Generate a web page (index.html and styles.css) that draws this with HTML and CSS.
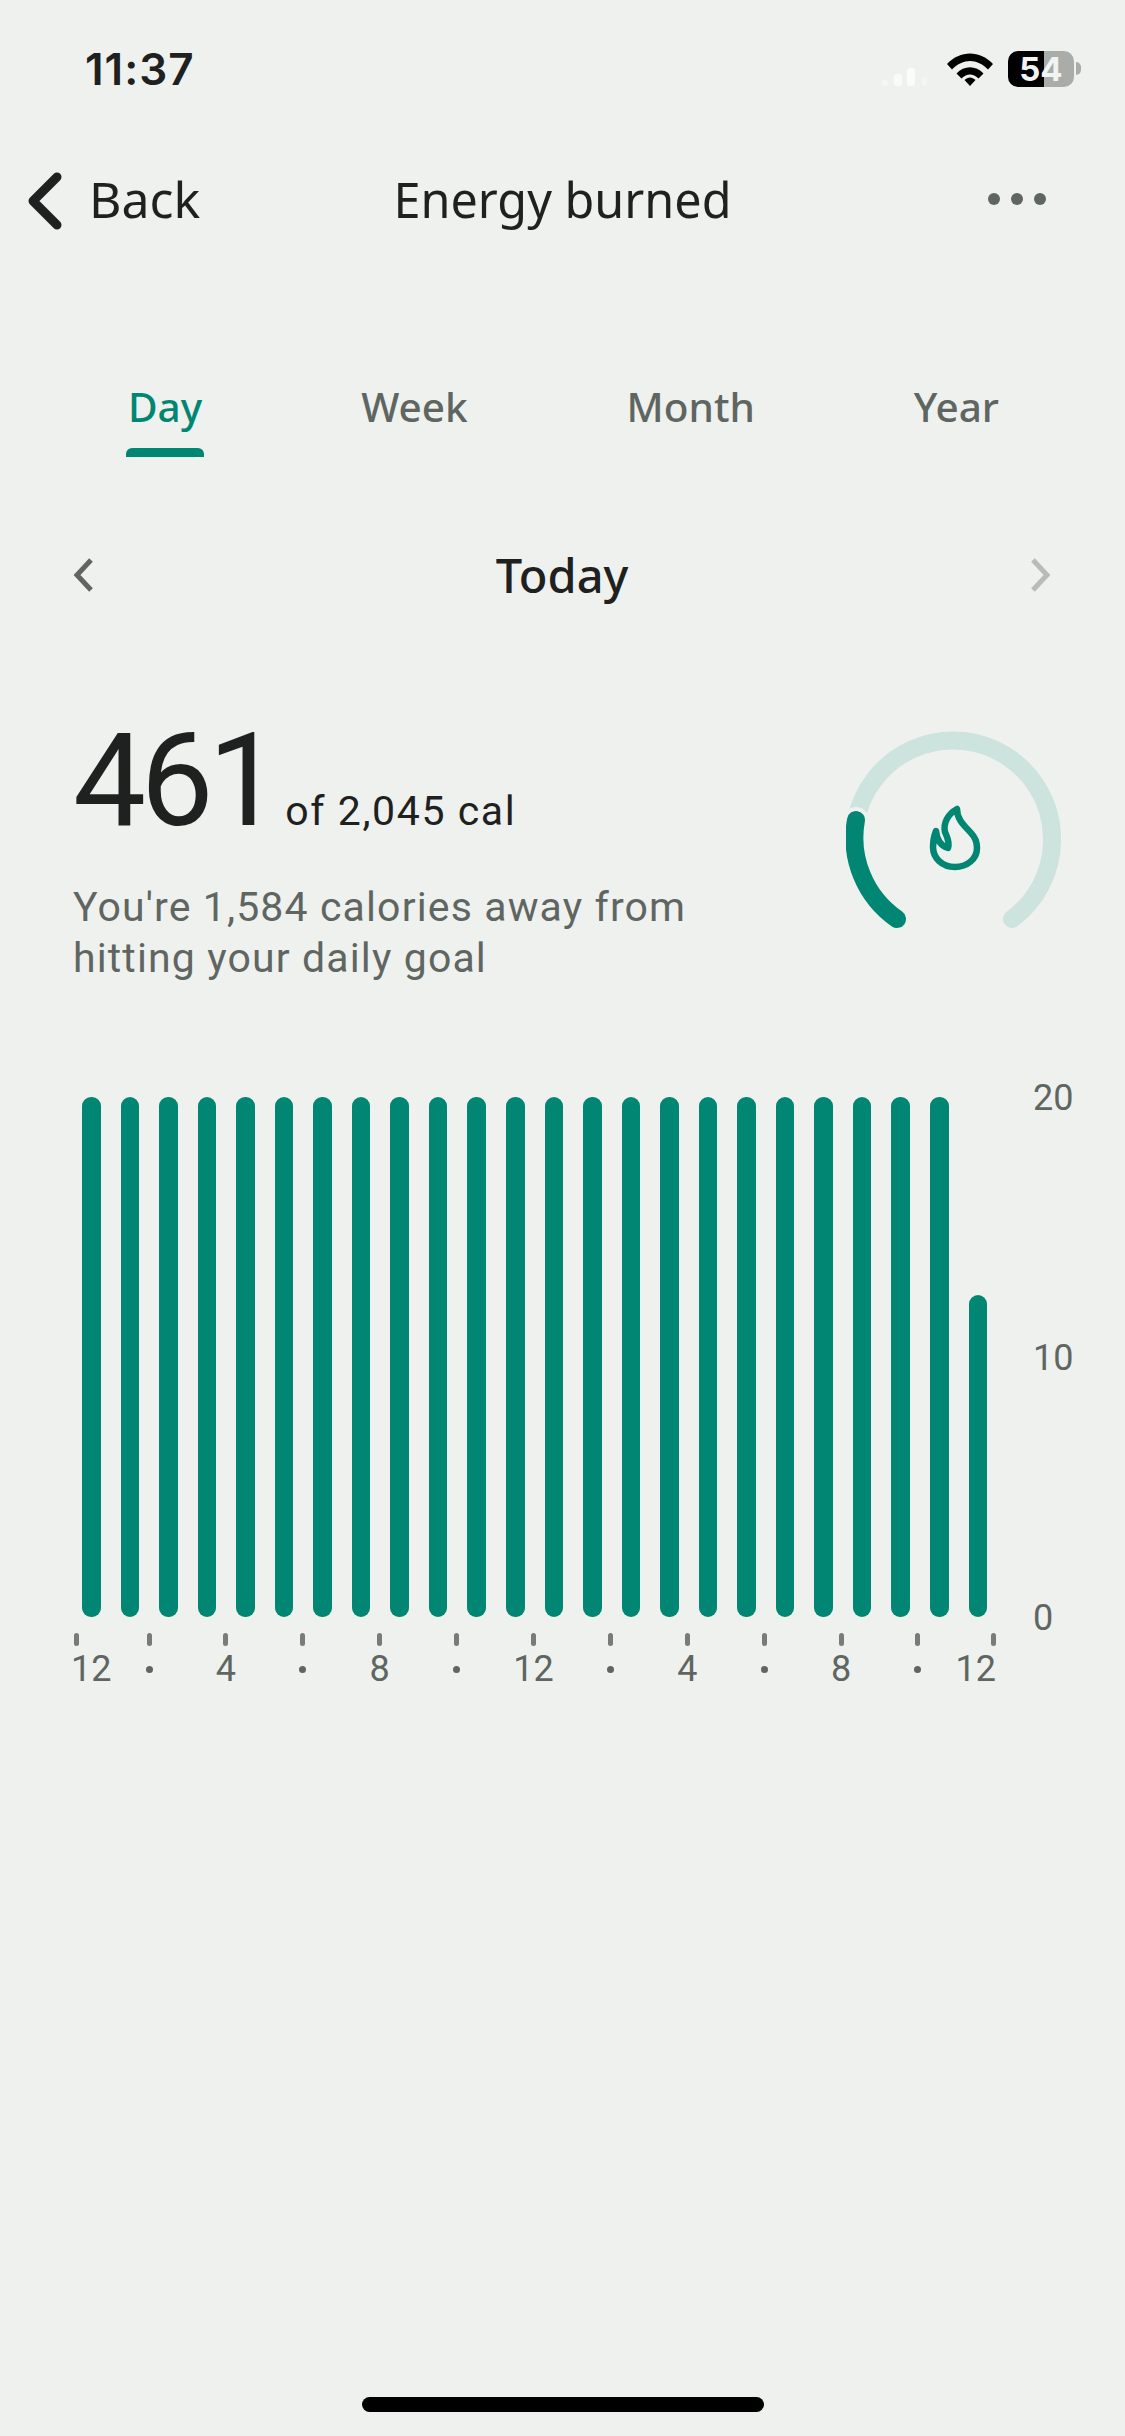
FILE: index.html
```html
<!DOCTYPE html>
<html lang="en">
  <head>
    <meta charset="UTF-8" />
    <meta name="viewport" content="width=device-width, initial-scale=1.0" />
    <title>Energy burned</title>
    <link rel="stylesheet" href="styles.css">
  </head>

  <body>
    <div class="status-bar">
      <span class="clock">11:37</span>
      <div class="status-icons">
        <svg class="signal" width="50" height="24" viewBox="0 0 50 24">
          <rect x="0" y="17" width="6" height="6" rx="2" fill="#f4f6f4" />
          <rect x="12" y="11" width="8" height="12" rx="3" fill="#f9faf9" />
          <rect x="25" y="5" width="8" height="18" rx="3" fill="#fafbfa" />
          <rect x="40" y="14" width="5" height="9" rx="2" fill="#f4f6f4" />
        </svg>
        <svg class="wifi" width="46" height="34" viewBox="0 0 46 34">
          <path d="M0 12 C13 -2 33 -2 46 12 L41 17.500 C30 6 16 6 5 17.500 Z" fill="#000" />
          <path d="M9.500 21.500 C17 13 29 13 36.500 21.500 L31.500 26.500 C26 21 20 21 14.500 26.500 Z" fill="#000" />
          <path d="M17.500 28 C21 24.500 25 24.500 28.500 28 L23 34 Z" fill="#000" />
        </svg>
        <div class="battery">
          <div class="battery-level">54</div>
          <div class="battery-nub"></div>
        </div>
      </div>
    </div>

    <div class="top-bar">
      <div class="back">
        <svg width="35" height="58" viewBox="0 0 35 58">
          <path d="M30 5 L6 29 L30 53" fill="none" stroke="#1f2120" stroke-width="9" stroke-linecap="round" stroke-linejoin="round" />
        </svg>
        <span>Back</span>
      </div>
      <h1>Energy burned</h1>
      <div class="more"><i></i><i></i><i></i></div>
    </div>

    <div class="tabs">
      <div class="tab active">Day</div>
      <div class="tab">Week</div>
      <div class="tab">Month</div>
      <div class="tab">Year</div>
    </div>

    <div class="date-row">
      <svg width="21" height="36" viewBox="0 0 21 36">
        <path d="M18 3 L4 18 L18 33" fill="none" stroke="#5f6662" stroke-width="5" />
      </svg>
      <span>Today</span>
      <svg width="21" height="36" viewBox="0 0 21 36">
        <path d="M3 3 L17 18 L3 33" fill="none" stroke="#b7bcb9" stroke-width="5" />
      </svg>
    </div>

    <div class="summary">
      <div class="summary-text">
        <div class="amount"><b>461</b><span>of 2,045 cal</span></div>
        <p>You're 1,584 calories away from<br />hitting your daily goal</p>
      </div>
      <svg class="gauge" width="216" height="200" viewBox="846 731 216 200">
        <path d="M1012 919 A99 99 0 1 0 856 820" fill="none" stroke="#cce3de" stroke-width="18" stroke-linecap="round" />
        <path d="M856 820 A99 99 0 0 0 897 919" fill="none" stroke="#eff1ef" stroke-width="26" stroke-linecap="round" />
        <path d="M856 820 A99 99 0 0 0 897 919" fill="none" stroke="#008672" stroke-width="18" stroke-linecap="round" />
        <path d="M957 809 C957 820 965 826 971 833 C976 838 977 843 977 848 C977 859 967 867 955 867 C942 867 933 858 933 847 C933 841 934 836 936 831 C937 840 941 846 948 848 C950 842 947 837 945 832 C943 823 948 814 957 809 Z" fill="none" stroke="#008672" stroke-width="6.500" stroke-linejoin="round" />
      </svg>
    </div>

    <div class="chart">
      <div class="bars" id="bars"></div>
      <div class="y-axis"><span>20</span><span>10</span><span>0</span></div>
    </div>
    <div class="x-axis" id="xAxis"></div>

    <div class="home-bar"></div>

    <script>
      // one bar per hour of the day, the last hour is still running
      const hours = [];
      for (let i = 0; i < 23; i++) hours.push(100);
      hours.push(62);

      const bars = document.getElementById("bars");
      hours.forEach((value) => {
        const bar = document.createElement("div");
        bar.className = "bar";
        bar.style.height = value + "%";
        bars.appendChild(bar);
      });

      const labels = ["12", "dot", "4", "dot", "8", "dot", "12", "dot", "4", "dot", "8", "dot", "12"];
      const xAxis = document.getElementById("xAxis");
      labels.forEach((label) => {
        const item = document.createElement("div");
        item.className = "x-item";
        const mark = label === "dot" ? '<i class="x-dot"></i>' : "<span>" + label + "</span>";
        item.innerHTML = '<i class="x-tick"></i>' + mark;
        xAxis.appendChild(item);
      });
    </script>
  </body>
</html>
```

FILE: styles.css
```css
* {
  box-sizing: border-box;
}

body {
  margin: 0;
  width: 1125px;
  height: 2436px;
  overflow: hidden;
  display: flex;
  flex-direction: column;
  background-color: #eff1ef;
  font-family: "Roboto", sans-serif;
  color: #1f2120;
}

.status-bar {
  display: flex;
  justify-content: space-between;
  align-items: center;
  height: 51px;
  margin-top: 43px;
  padding: 0 44px 0 85px;
}

.clock {
  font-family: "Inter", sans-serif;
  font-size: 44px;
  font-weight: 600;
  letter-spacing: 1px;
}

.status-icons {
  display: flex;
  align-items: center;
  gap: 15px;
}

.signal {
  margin-top: 12px;
}

.battery {
  display: flex;
  align-items: center;
  gap: 2px;
}

.battery-level {
  width: 66px;
  height: 36px;
  border-radius: 10px;
  background: linear-gradient(90deg, #000 54%, #a9aca9 54%);
  color: #f2f4f2;
  font-family: "Inter", sans-serif;
  font-size: 33px;
  font-weight: 700;
  line-height: 36px;
  text-align: center;
}

.battery-nub {
  width: 5px;
  height: 13px;
  border-radius: 0 6px 6px 0;
  background-color: #a9aca9;
}

.top-bar {
  display: grid;
  grid-template-columns: 1fr auto 1fr;
  align-items: center;
  height: 60px;
  margin-top: 74px;
  padding: 0 27px;
  font-family: "Noto Sans", sans-serif;
}

.back {
  display: flex;
  align-items: center;
  gap: 27px;
  font-size: 50px;
}

.back span,
.top-bar h1 {
  margin-top: -3px;
}

.top-bar h1 {
  margin-bottom: 0;
  font-size: 48.500px;
  font-weight: 400;
}

.more {
  display: flex;
  justify-content: flex-end;
  gap: 11px;
  margin: -3px 52px 0 0;
}

.more i {
  width: 12px;
  height: 12px;
  border-radius: 50%;
  background-color: #5f6662;
}

.tabs {
  display: flex;
  gap: 155px;
  margin-top: 152px;
  height: 80px;
  padding-left: 126px;
  font-family: "Noto Sans", sans-serif;
}

.tab {
  padding: 0 2px;
  font-size: 40.500px;
  font-weight: 500;
  color: #5f6662;
  line-height: 54px;
}

.tab.active {
  color: #008672;
}

.tab.active::after {
  content: "";
  display: block;
  height: 9px;
  margin: 14px -2px 0;
  border-radius: 6px 6px 0 0;
  background-color: #008672;
}

.date-row {
  display: flex;
  justify-content: space-between;
  align-items: center;
  margin-top: 87px;
  padding: 0 74px 0 73px;
  font-family: "Noto Sans", sans-serif;
  font-size: 47px;
  font-weight: 500;
  height: 56px;
}

.summary {
  display: flex;
  justify-content: space-between;
  align-items: flex-start;
  margin-top: 128px;
  padding: 0 63px 0 73px;
}

.amount {
  display: flex;
  align-items: baseline;
  gap: 9.500px;
  line-height: 120px;
  margin-top: -10px;
}

.amount b {
  font-size: 130px;
  font-weight: 400;
  letter-spacing: -5.500px;
}

.amount span {
  font-size: 41px;
  letter-spacing: 1.600px;
}

.summary-text p {
  margin: 11px 0 0;
  font-size: 41px;
  line-height: 51px;
  color: #5f6662;
  letter-spacing: 1.130px;
}

.chart {
  display: flex;
  margin-top: 113px;
  height: 520px;
  padding-left: 82px;
}

.bars {
  display: flex;
  align-items: flex-end;
  gap: 20.050px;
  width: 906px;
  height: 520px;
}

.bar {
  width: 18.500px;
  background-color: #008672;
  border-radius: 9px;
}

.y-axis {
  display: flex;
  flex-direction: column;
  justify-content: space-between;
  height: 560px;
  margin: -19px 0 0 45px;
  font-size: 36px;
  line-height: 40px;
  color: #5f6662;
}

.x-axis {
  display: grid;
  grid-template-columns: 75px repeat(10, 76.900px) 78px 0;
  margin-top: 16px;
  padding-left: 74px;
}

.x-item {
  width: 0;
  display: flex;
  flex-direction: column;
  align-items: center;
}

.x-item:first-child {
  align-items: flex-start;
}

.x-item:first-child span {
  margin-left: -3px;
}

.x-item:last-child {
  align-items: flex-end;
}

.x-tick {
  flex: none;
  width: 5px;
  height: 13px;
  border-radius: 3px;
  background-color: #777c79;
}

.x-item span {
  font-size: 36px;
  line-height: 42px;
  color: #5f6662;
  margin-top: 2px;
}

.x-dot {
  flex: none;
  width: 7px;
  height: 7px;
  margin-top: 20px;
  border-radius: 50%;
  background-color: #5f6662;
}

.home-bar {
  align-self: center;
  flex: none;
  width: 402px;
  height: 15px;
  margin: auto 0 24px;
  border-radius: 8px;
  background-color: #000;
}
```
